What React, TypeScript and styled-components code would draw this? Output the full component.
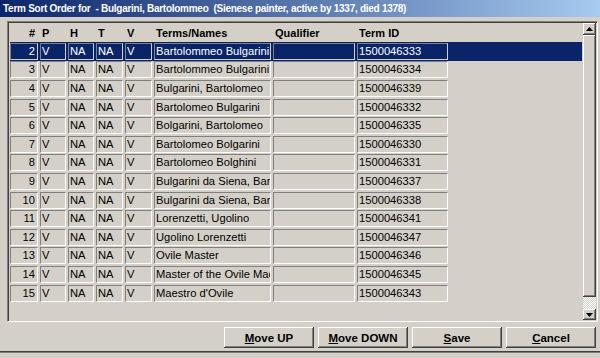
import styled, { createGlobalStyle } from "styled-components"

const GlobalStyle = createGlobalStyle`
  html, body {
    margin: 0;
    padding: 0;
    background: #d4d0c8;
  }
  body {
    font-family: "Liberation Sans", Arial, sans-serif;
  }
`

const Dialog = styled.div`
  width: 600px;
  height: 358px;
  overflow: hidden;
  display: flex;
  flex-direction: column;
  background: #d4d0c8;
`

const TitleBar = styled.div`
  flex: none;
  height: 17px;
  padding-left: 3px;
  background: linear-gradient(to right, #0a246a, #a6caf0);
  color: #fff;
  font-weight: bold;
  font-size: 10px;
  letter-spacing: -0.27px;
  line-height: 17px;
  white-space: pre;
`

const Body = styled.div`
  flex: none;
  height: 335px;
  box-sizing: border-box;
  padding: 4px 2px 0 7px;
  display: flex;
  flex-direction: column;
  border-bottom: 1px solid #404040;
`

const Frame = styled.div`
  height: 301px;
  box-sizing: border-box;
  display: flex;
  border-top: 1px solid #808080;
  border-left: 1px solid #808080;
  border-bottom: 1px solid #fff;
  border-right: 1px solid #fff;
  box-shadow: inset 1px 1px #404040, inset -1px -1px #d4d0c8;
  padding: 1px;
`

const List = styled.div`
  flex: 1;
  padding: 0 1px;
  display: flex;
  flex-direction: column;
`

const columns = "28px 26px 26px 27px 27px 117px 82px 91px"

const HeaderRow = styled.div`
  display: grid;
  grid-template-columns: ${columns};
  column-gap: 2px;
  height: 19px;
  align-items: center;
  font-size: 11px;
  font-weight: bold;
  color: #000;
`

const HeadLabel = styled.div<{ $right?: boolean }>`
  padding: ${(p) => (p.$right ? "0 3px 0 0" : "0 0 0 2px")};
  text-align: ${(p) => (p.$right ? "right" : "left")};
  white-space: nowrap;
`

const Row = styled.div<{ $selected?: boolean }>`
  display: grid;
  grid-template-columns: ${columns};
  column-gap: 2px;
  height: 18.6px;
  align-items: center;
  background: ${(p) => (p.$selected ? "#0a246a" : "transparent")};
  color: ${(p) => (p.$selected ? "#fff" : "#000")};
`

const Cell = styled.div<{ $right?: boolean; $selected?: boolean }>`
  height: 17px;
  box-sizing: border-box;
  border-top: 1px solid #808080;
  border-left: 1px solid #808080;
  border-bottom: 1px solid ${(p) => (p.$selected ? "#d4d0c8" : "#fff")};
  border-right: 1px solid ${(p) => (p.$selected ? "#d4d0c8" : "#fff")};
  padding: ${(p) => (p.$right ? "0 2px 0 0" : "0 0 0 1px")};
  text-align: ${(p) => (p.$right ? "right" : "left")};
  font-size: 11.2px;
  line-height: 15px;
  white-space: nowrap;
  overflow: hidden;
`

const ScrollBar = styled.div`
  width: 13px;
  flex: none;
  display: flex;
  flex-direction: column;
`

const ArrowButton = styled.div<{ $h: number }>`
  height: ${(p) => p.$h}px;
  flex: none;
  box-sizing: border-box;
  background: #d4d0c8;
  box-shadow: inset -1px -1px #404040, inset 1px 1px #fff, inset -2px -2px #808080;
  display: flex;
  align-items: center;
  justify-content: center;
`

const Thumb = styled.div`
  height: 262px;
  flex: none;
  background: #d4d0c8;
  box-shadow: inset -1px -1px #404040, inset 1px 1px #fff, inset -2px -2px #808080;
`

const Track = styled.div`
  flex: 1;
  background: repeating-conic-gradient(#d4d0c8 0 25%, #fff 0 50%) 0 0 / 2px 2px;
`

const ButtonBar = styled.div`
  display: flex;
  justify-content: flex-end;
  gap: 4px;
  margin-top: 5px;
  padding-right: 2px;
`

const Button = styled.button`
  width: 90px;
  height: 21px;
  border: none;
  padding: 0;
  background: #d4d0c8;
  box-shadow: inset -1px -1px #404040, inset 1px 1px #fff, inset -2px -2px #808080;
  font-family: "Liberation Sans", Arial, sans-serif;
  font-weight: bold;
  font-size: 11.5px;
  color: #000;
  u {
    text-decoration: underline;
  }
`

const BehindStrip = styled.div`
  flex: 1;
  background: #d4d0c8;
  border-top: 1px solid #808080;
`

type Term = {
  n: number
  name: string
  id: string
}

const terms: Term[] = [
  { n: 2, name: "Bartolommeo Bulgarini", id: "1500046333" },
  { n: 3, name: "Bartolommeo Bulgarini", id: "1500046334" },
  { n: 4, name: "Bulgarini, Bartolomeo", id: "1500046339" },
  { n: 5, name: "Bartolomeo Bulgarini", id: "1500046332" },
  { n: 6, name: "Bolgarini, Bartolomeo", id: "1500046335" },
  { n: 7, name: "Bartolomeo Bolgarini", id: "1500046330" },
  { n: 8, name: "Bartolomeo Bolghini", id: "1500046331" },
  { n: 9, name: "Bulgarini da Siena, Bartolommeo", id: "1500046337" },
  { n: 10, name: "Bulgarini da Siena, Bartolomeo", id: "1500046338" },
  { n: 11, name: "Lorenzetti, Ugolino", id: "1500046341" },
  { n: 12, name: "Ugolino Lorenzetti", id: "1500046347" },
  { n: 13, name: "Ovile Master", id: "1500046346" },
  { n: 14, name: "Master of the Ovile Madonna", id: "1500046345" },
  { n: 15, name: "Maestro d'Ovile", id: "1500046343" },
]

const Arrow = ({ down }: { down?: boolean }) => (
  <svg width="7" height="4" viewBox="0 0 7 4">
    <polygon points={down ? "0,0 7,0 3.5,4" : "0,4 7,4 3.5,0"} fill="#000" />
  </svg>
)

export default function App() {
  return (
    <>
      <GlobalStyle />
      <Dialog>
        <TitleBar>{"Term Sort Order for  - Bulgarini, Bartolommeo  (Sienese painter, active by 1337, died 1378)"}</TitleBar>
        <Body>
          <Frame>
            <List>
              <HeaderRow>
                <HeadLabel $right>#</HeadLabel>
                <HeadLabel>P</HeadLabel>
                <HeadLabel>H</HeadLabel>
                <HeadLabel>T</HeadLabel>
                <HeadLabel>V</HeadLabel>
                <HeadLabel>Terms/Names</HeadLabel>
                <HeadLabel>Qualifier</HeadLabel>
                <HeadLabel>Term ID</HeadLabel>
              </HeaderRow>
              {terms.map((t, i) => {
                const sel = i === 0
                return (
                  <Row key={t.n} $selected={sel}>
                    <Cell $selected={sel} $right>{t.n}</Cell>
                    <Cell $selected={sel}>V</Cell>
                    <Cell $selected={sel}>NA</Cell>
                    <Cell $selected={sel}>NA</Cell>
                    <Cell $selected={sel}>V</Cell>
                    <Cell $selected={sel}>{t.name}</Cell>
                    <Cell $selected={sel}></Cell>
                    <Cell $selected={sel}>{t.id}</Cell>
                  </Row>
                )
              })}
            </List>
            <ScrollBar>
              <ArrowButton $h={12}><Arrow /></ArrowButton>
              <Thumb />
              <Track />
              <ArrowButton $h={11}><Arrow down /></ArrowButton>
            </ScrollBar>
          </Frame>
          <ButtonBar>
            <Button><u>M</u>ove UP</Button>
            <Button><u>M</u>ove DOWN</Button>
            <Button><u>S</u>ave</Button>
            <Button><u>C</u>ancel</Button>
          </ButtonBar>
        </Body>
        <BehindStrip />
      </Dialog>
    </>
  )
}
